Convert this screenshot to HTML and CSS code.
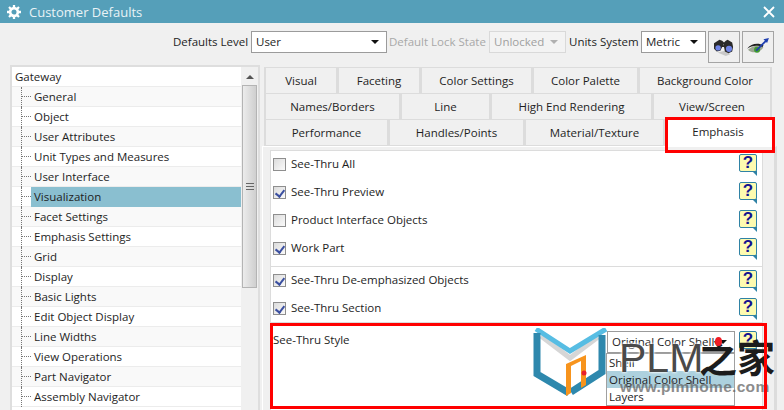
FILE: index.html
```html
<!DOCTYPE html>
<html lang="en">
<head>
<meta charset="utf-8">
<title>Customer Defaults</title>
<link rel="stylesheet" href="styles.css">
</head>
<body>
<div class="window">
  <header class="titlebar">
    <svg class="gear" viewBox="0 0 16 16" width="14" height="14"><circle cx="8" cy="8" r="4.4" fill="none" stroke="#fff" stroke-width="3"/><path d="M8 0v3M8 13v3M0 8h3M13 8h3M2.3 2.3l2.2 2.2M11.5 11.5l2.2 2.2M13.7 2.3l-2.2 2.2M4.5 11.5l-2.2 2.2" stroke="#fff" stroke-width="2.6"/></svg>
    <span class="title">Customer Defaults</span>
    <svg class="close" viewBox="0 0 12 12" width="12" height="12"><path d="M1 1l10 10M11 1L1 11" stroke="#fff" stroke-width="1.8"/></svg>
  </header>

  <div class="toolbar">
    <span class="lbl l-level">Defaults Level</span>
    <div class="combo c-level"><span>User</span><i class="arrow"></i></div>
    <span class="lbl dim">Default Lock State</span>
    <div class="combo c-lock dimc"><span>Unlocked</span><i class="arrow"></i></div>
    <span class="lbl l-units">Units System</span>
    <div class="combo c-units"><span>Metric</span><i class="arrow"></i></div>
    <button class="tool">
      <svg viewBox="0 0 26 22" width="24" height="20"><path d="M6 17l9 4 5-2-6-4z" fill="#c8c8c8"/><path d="M2 7l6-4 3 1 2 2 2-2 2-1 5 3 1 5-1 5-4 2-4-2-1-5h-2l-2 4-4 1-3-3z" fill="#2a2a2a"/><ellipse cx="6.500" cy="12" rx="3" ry="2.800" fill="#6f84e6"/><ellipse cx="18.500" cy="13" rx="3.400" ry="3.400" fill="#6f84e6"/><path d="M12 9l1-1" stroke="#999"/></svg>
    </button>
    <button class="tool">
      <svg viewBox="0 0 26 22" width="24" height="20"><path d="M2 14c4-4 11-6 17-3-3 6-12 8-17 3z" fill="#9aa58f"/><path d="M1 13c4-6 12-7 18-4l-1 2c-5-2-12-2-17 2z" fill="#1f1f1f"/><circle cx="12" cy="14" r="3.300" fill="#3f9a2f"/><path d="M11 15L22 4" stroke="#1f3fb0" stroke-width="2"/><path d="M25 1l-6 1.500 4 4z" fill="#1f3fb0"/></svg>
    </button>
  </div>

  <div class="main">
    <nav class="tree">
      <div class="list">
        <div class="node root">Gateway</div>
        <div class="node">General</div>
        <div class="node">Object</div>
        <div class="node">User Attributes</div>
        <div class="node">Unit Types and Measures</div>
        <div class="node">User Interface</div>
        <div class="node sel"><span>Visualization</span></div>
        <div class="node">Facet Settings</div>
        <div class="node">Emphasis Settings</div>
        <div class="node">Grid</div>
        <div class="node">Display</div>
        <div class="node">Basic Lights</div>
        <div class="node">Edit Object Display</div>
        <div class="node">Line Widths</div>
        <div class="node">View Operations</div>
        <div class="node">Part Navigator</div>
        <div class="node">Assembly Navigator</div>
      </div>
      <div class="vscroll">
        <i class="up"></i>
        <div class="thumb"><i class="grip"></i></div>
      </div>
    </nav>

    <section class="settings">
      <div class="tabs">
        <div class="tabrow">
          <div class="tab w74">Visual</div><div class="tab w83">Faceting</div><div class="tab w112">Color Settings</div><div class="tab w106">Color Palette</div><div class="tab w132">Background Color</div>
        </div>
        <div class="tabrow">
          <div class="tab w137">Names/Borders</div><div class="tab w90">Line</div><div class="tab w162">High End Rendering</div><div class="tab w118">View/Screen</div>
        </div>
        <div class="tabrow">
          <div class="tab w125">Performance</div><div class="tab w136">Handles/Points</div><div class="tab w140">Material/Texture</div><div class="tab active w107">Emphasis</div>
        </div>
      </div>

      <div class="page">
        <div class="panel">
          <div class="group first">
            <div class="opt"><i class="cb"></i><span>See-Thru All</span><i class="help"><b>?</b></i></div>
            <div class="opt"><i class="cb on"></i><span>See-Thru Preview</span><i class="help"><b>?</b></i></div>
            <div class="opt"><i class="cb"></i><span>Product Interface Objects</span><i class="help"><b>?</b></i></div>
            <div class="opt"><i class="cb on"></i><span>Work Part</span><i class="help"><b>?</b></i></div>
          </div>
          <div class="group second">
            <div class="opt"><i class="cb on"></i><span>See-Thru De-emphasized Objects</span><i class="help"><b>?</b></i></div>
            <div class="opt"><i class="cb on"></i><span>See-Thru Section</span><i class="help"><b>?</b></i></div>
          </div>
          <div class="style-row">
            <span class="style-lbl">See-Thru Style</span>
            <div class="style-ctl">
              <div class="combo c-style"><span>Original Color Shell</span><i class="arrow"></i></div>
              <i class="help"><b>?</b></i>
            </div>
          </div>
        </div>
      </div>
    </section>
  </div>

  <div class="tab-mark"></div>
  <div class="menu">
    <div>Shell</div>
    <div class="hl">Original Color Shell</div>
    <div>Layers</div>
  </div>

  <div class="watermark">
    <svg class="wm-logo" viewBox="0 0 76 72" width="76" height="72">
      <path d="M8 8l29 22 28-21" fill="none" stroke="#d6d6d6" stroke-width="5"/>
      <path d="M3 1l34 22 36-22" fill="none" stroke="#57bde3" stroke-width="5"/>
      <path d="M4 5v41l32 19" fill="none" stroke="#2e88ad" stroke-width="7"/>
      <path d="M69 7v37L38 64" fill="none" stroke="#2e88ad" stroke-width="7"/>
      <path d="M33 36l20-9v30l-5 3V33l-10 5v27l-5 3z" fill="#f7941d"/>
      <circle cx="51" cy="45" r="2.500" fill="#e8202a"/>
    </svg>
    <span class="wm-plm">PLM</span>
    <span class="wm-cn">之家</span>
    <span class="wm-url">www.plmhome.com</span>
    <i class="wm-dot"></i>
  </div>
  <div class="style-mark"></div>
</div>
</body>
</html>
```

FILE: styles.css
```css
* { box-sizing: border-box; }
html, body { margin: 0; padding: 0; }
body { width: 784px; height: 410px; overflow: hidden; background: #f0f0f0; font: 11.5px/16px "Open Sans", "Noto Sans", sans-serif; color: #1e1e1e; }
.window { position: relative; width: 784px; height: 410px; overflow: hidden; }

.titlebar { height: 23px; background: #559fb9; display: flex; align-items: center; padding: 0 9px 0 7px; color: #e9f3f6; }
.gear { flex: none; }
.title { margin-left: 8px; font-size: 13px; flex: 1; }

.toolbar { height: 42px; display: flex; align-items: flex-start; padding: 8px 0 0 173px; }
.lbl { line-height: 22px; white-space: nowrap; }
.l-level { width: 72px; margin-right: 6px; }
.dim { color: #a8a8a8; width: 95px; margin-left: 2px; margin-right: 5px; }
.l-units { width: 67px; margin-left: 3px; margin-right: 5px; }
.combo { position: relative; height: 22px; background: #fff; border: 1px solid #9b9b9b; line-height: 20px; padding-left: 4px; }
.arrow { position: absolute; right: 7px; top: 8px; width: 0; height: 0; border: 4px solid transparent; border-top: 4px solid #111; border-bottom: 0; }
.c-level { width: 136px; }
.c-lock { width: 77px; }
.dimc { border-color: #d9d9d9; color: #a0a0a0; background: #f3f3f3; }
.dimc .arrow { border-top-color: #b0b0b0; }
.c-units { width: 65px; }
.tool { width: 32px; height: 32px; margin-left: 2px; padding: 0; background: #efefef; border: 1px solid #a4a4a4; display: flex; align-items: center; justify-content: center; }

.main { display: flex; align-items: flex-start; padding-left: 10px; }
.tree { width: 250px; height: 360px; background: #fff; border: 2px solid #dedede; display: flex; }
.list { flex: 1; min-width: 0; }
.node { position: relative; height: 20px; padding-left: 22px; line-height: 19px; background: #f9f9f9; border-bottom: 1px solid #ececec; white-space: nowrap; }
.node:nth-child(odd) { background: #fff; }
.node.root { padding-left: 3px; background: #fff; }
.node:not(.root)::before { content: ""; position: absolute; left: 9px; top: 0; height: 20px; border-left: 1px dotted #777; }
.node:not(.root)::after { content: ""; position: absolute; left: 10px; top: 9px; width: 9px; border-top: 1px dotted #777; }
.node.sel { padding-left: 19px; }
.node.sel span { display: block; background: #8abfd0; height: 20px; padding-left: 3px; }
.vscroll { flex: none; width: 17px; background: #f0f0f0; position: relative; }
.up { position: absolute; left: 5px; top: 8px; width: 0; height: 0; border: 4px solid transparent; border-bottom: 4px solid #555; border-top: 0; }
.thumb { position: absolute; left: 1px; top: 18px; width: 15px; height: 203px; border: 1px solid #b4b4b4; background: linear-gradient(to right, #ececec, #cfcfcf); display: flex; align-items: center; justify-content: center; }
.grip { width: 8px; height: 7px; border-top: 1px solid #666; border-bottom: 1px solid #666; background: linear-gradient(#666, #666) center/100% 1px no-repeat; }

.settings { flex: none; width: 515px; margin-left: 2px; padding-top: 2px; }
.tabs { width: 508px; margin-left: 2px; border-top: 1px solid #dcdcdc; }
.tabrow { display: flex; height: 26px; }
.tab { height: 26px; border: 1px solid #dcdcdc; border-top: 0; border-right-width: 2px; text-align: center; line-height: 25px; white-space: nowrap; background: #f0f0f0; }
.tab:first-child { border-left-width: 2px; }
.tab.active { background: #fff; line-height: 23px; border-color: #fff; }
.w74 { width: 74px; } .w83 { width: 83px; } .w112 { width: 112px; } .w106 { width: 106px; } .w132 { width: 133px; }
.w137 { width: 137px; } .w90 { width: 90px; } .w162 { width: 162px; } .w118 { width: 119px; }
.w125 { width: 125px; } .w136 { width: 136px; } .w140 { width: 140px; } .w107 { width: 107px; }

.page { height: 264px; border-left: 1px solid #fff; border-top: 1px solid #fff; border-right: 3px solid #dcdcdc; padding: 3px 0 0 7px; }
.panel { width: 493px; height: 261px; background: #fff; border: 1px solid #dcdcdc; border-bottom: 0; }
.group { border-bottom: 1px solid #dcdcdc; }
.group.first { margin-top: -1px; padding-bottom: 4px; }
.group.second { margin-top: -1px; }
.opt { display: flex; align-items: center; height: 28px; padding: 0 5px 0 2px; }
.opt span { flex: 1; margin-left: 5px; }
.cb { flex: none; width: 13px; height: 13px; border: 1px solid #8e8e8e; background: linear-gradient(135deg, #dcdcdc, #fafafa); position: relative; }
.cb.on::after { content: ""; position: absolute; left: 3px; top: 1px; width: 4px; height: 7px; border: solid #3a4fa0; border-width: 0 2px 2px 0; transform: rotate(38deg); }
.help { flex: none; position: relative; display: block; width: 18px; height: 18px; background: #fdfbb0; border: 1px solid #2f82a5; border-radius: 2px; text-align: center; margin-bottom: 3px; }
.help b { color: #14148f; font: 700 17px/16px "Liberation Sans", sans-serif; display: block; }
.help::after { content: ""; position: absolute; right: -1px; bottom: -5px; width: 0; height: 0; border-left: 5px solid transparent; border-top: 5px solid #2f82a5; }
.style-row { display: flex; justify-content: space-between; padding: 8px 5px 0 2px; }
.style-lbl { line-height: 18px; }
.style-ctl { display: flex; align-items: flex-start; gap: 4px; }
.c-style { width: 128px; height: 22px; }

.tab-mark { position: absolute; left: 665px; top: 117px; width: 110px; height: 36px; border: 3px solid #f00; }
.style-mark { position: absolute; left: 270px; top: 323px; width: 497px; height: 86px; border: 3px solid #f00; }
.menu { position: absolute; left: 606px; top: 353px; width: 129px; height: 53px; background: #fff; border: 1px solid #a0a0a0; line-height: 17px; }
.menu div { height: 17px; padding-left: 2px; }
.menu .hl { background: #add1de; }

.watermark { position: absolute; left: 532px; top: 326px; width: 252px; height: 84px; }
.wm-logo { position: absolute; left: 1px; top: 2px; }
.wm-plm { position: absolute; left: 87px; top: 8px; font: 41px/48px "Liberation Sans", sans-serif; color: #4a4a4a; text-shadow: 0 0 3px #fff, 0 0 3px #fff; }
.wm-cn { position: absolute; left: 167px; top: 8px; font: 700 38px/44px "Noto Sans CJK SC", sans-serif; color: #1c1c1c; white-space: nowrap; }
.wm-url { position: absolute; left: 88px; top: 52px; font: 700 15.500px/18px "Liberation Sans", sans-serif; color: #666; opacity: .75; white-space: nowrap; letter-spacing: .3px; }
.wm-dot { position: absolute; left: 183px; top: 11px; width: 7px; height: 9px; border-radius: 50%; background: #f01c25; }
```
